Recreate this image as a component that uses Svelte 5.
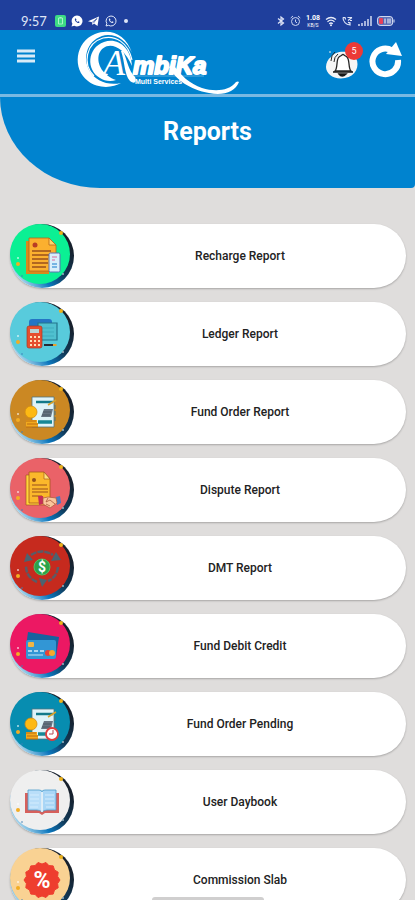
<script lang="ts">
	let reports = [
		{ title: 'Recharge Report', icon: 'recharge', color: '#0bf094' },
		{ title: 'Ledger Report', icon: 'ledger', color: '#58cbdc' },
		{ title: 'Fund Order Report', icon: 'fund', color: '#cb8823' },
		{ title: 'Dispute Report', icon: 'dispute', color: '#ea6268' },
		{ title: 'DMT Report', icon: 'dmt', color: '#c62a1e' },
		{ title: 'Fund Debit Credit', icon: 'card', color: '#ec1863' },
		{ title: 'Fund Order Pending', icon: 'pending', color: '#078db0' },
		{ title: 'User Daybook', icon: 'book', color: '#efefef' },
		{ title: 'Commission Slab', icon: 'commission', color: '#f9d293' }
	];

	let notifications = 5;

	// scalloped edge of the commission seal
	const seal = Array.from({ length: 28 }, (_, i) => {
		const r = i % 2 ? 16 : 18;
		const a = (i * Math.PI) / 14;
		return `${(32 + r * Math.cos(a)).toFixed(1)},${(32 + r * Math.sin(a)).toFixed(1)}`;
	}).join(' ');
</script>

<div class="screen">
	<div class="status-bar">
		<span class="time">9:57</span>
		<div class="status-left">
			<svg width="11" height="12" viewBox="0 0 11 12">
				<rect width="11" height="12" rx="2" fill="#3ddc84" />
				<path d="M3.500 3h4v6h-4z M4.500 2.500h2" fill="none" stroke="#a9f3c9" />
			</svg>
			<svg width="12" height="12" viewBox="0 0 12 12">
				<path d="M6 .5A5.500 5.500 0 1 1 3.300 10.800L.5 11.500l.9-2.700A5.500 5.500 0 0 1 6 .5z" fill="#fff" />
				<path d="M4 3.500c-.8 2 1.800 5 4.200 4.500l.2-1.200-1.300-.5-.6.600-1.500-1.500.5-.7-.6-1.300z" fill="#1f3f9c" />
			</svg>
			<svg width="12" height="12" viewBox="0 0 12 12">
				<path d="M0 6.300 11 1.500 9.500 11 6 8.500 4.500 10 4 7.300z" fill="#fff" />
				<path d="M4.200 7.300 9 3.500 5.500 8" fill="none" stroke="#1f3f9c" stroke-width=".7" />
			</svg>
			<svg width="12" height="12" viewBox="0 0 12 12">
				<path d="M6 1A5 5 0 1 1 3.500 10.300L1 11l.8-2.400A5 5 0 0 1 6 1z" fill="none" stroke="#dfe5f7" />
				<path d="M4 3.500c-.8 2 1.800 5 4.200 4.500l.2-1.200-1.300-.5-.6.600-1.500-1.500.5-.7-.6-1.300z" fill="#dfe5f7" />
			</svg>
			<span class="more"></span>
		</div>
		<div class="status-right">
			<svg width="8" height="12" viewBox="0 0 8 12">
				<path d="M1 3.500 6.500 8 4 10V2l2.500 2L1 8.500" fill="none" stroke="#dfe5f7" stroke-width="1.200" />
			</svg>
			<svg width="11" height="12" viewBox="0 0 11 12">
				<circle cx="5.500" cy="6.500" r="4" fill="none" stroke="#cdd6f0" />
				<path d="M5.500 4.500v2.300l1.500 1M.7 3 3 1M10.300 3 8 1" fill="none" stroke="#cdd6f0" />
			</svg>
			<div class="speed"><b>1.08</b><span>KB/S</span></div>
			<svg width="12" height="12" viewBox="0 0 12 12">
				<path d="M1 4.500q5-4 10 0M2.500 6.700q3.500-3 7 0M4.200 8.700q1.800-1.400 3.600 0" fill="none" stroke="#e8ecf9" stroke-width="1.300" />
				<circle cx="6" cy="10.300" r="1" fill="#e8ecf9" />
			</svg>
			<svg width="11" height="12" viewBox="0 0 11 12">
				<path d="M1 2.500c0 4 3 7 7 7.500V7.800l-2-.5M1 2.500h2l.6 2M5.500 2.500H10M6 5.500l4-3M8 5.500h2" fill="none" stroke="#dfe5f7" stroke-width="1.200" />
			</svg>
			<svg width="14" height="12" viewBox="0 0 14 12">
				<path d="M1 9v2M4 8v3M7 6v5M10 4v7M13 1v10" stroke="#dfe5f7" stroke-width="1.400" />
			</svg>
			<svg width="18" height="12" viewBox="0 0 18 12">
				<rect x=".6" y="1.600" width="15" height="8.800" rx="2.500" fill="#5369b4" stroke="#dfe5f7" />
				<rect x="2" y="3" width="4" height="6" rx="1" fill="#e8405a" />
				<path d="M8 3.500v5M11 3.500v5M13 3.500v5" stroke="#fff" />
				<path d="M17 4.500v3" stroke="#dfe5f7" />
			</svg>
		</div>
	</div>

	<header>
		<button class="menu" aria-label="Menu">
			<svg width="20" height="16" viewBox="0 0 20 16">
				<path d="M1 3h18M1 8h18M1 13h18" stroke="#d9ebf7" stroke-width="3" />
			</svg>
		</button>
		<svg class="logo" width="170" height="64" viewBox="0 0 170 64" role="img" aria-label="Ambika Multi Services">
			<g fill="#fff">
				<path d="M60 23C54 4 38-2 23 4 3 12 0 39 16 51c10 8 25 7 33 2-13 3-26-2-32-13C9 23 19 6 36 5c11 0 19 7 24 18z" />
				<path d="M60 36C59 17 45 7 32 12 15 18 14 40 28 48c4 3 11 4 16 2-12-4-20-15-17-26 5-13 23-12 33 12z" />
				<path d="M60 30C56 12 43 5 31 8 14 13 10 34 22 46" fill="none" stroke="#fff" stroke-width="1.200" />
				<text class="initial" x="31" y="45">A</text>
				<path d="M49 21c4 11 3 23 9 30 5 4 7 0 5-4-7-7-7-15-12-26z" />
			</g>
			<g fill="#fff">
				<text class="brand" x="61" y="44">mbiKa</text>
				<text class="tagline" x="63" y="54">Multi Services</text>
				<path d="M101 34c7 11 17 20 29 24 13 4 27 3 34-6q2-1 3 0c-4 10-16 14-30 11-19-3-34-14-40-26z" />
				<path d="M62 46h70" stroke="#fff" stroke-opacity=".5" stroke-width=".7" />
			</g>
		</svg>
		<div class="actions">
			<button class="bell" aria-label="Notifications">
				<svg width="38" height="40" viewBox="0 0 38 40">
					<path d="M6 15c5-7 20-7 25 1 4 8 0 18-11 20C9 38 1 32 1 25c0-4 2-8 5-10z" fill="#f5f5f5" />
					<path d="M10 29c3-3 1-12 4-14 1-1 2-1 3-2 1-1 1-1 2 0 1 1 2 1 3 2 3 3 1 11 4 14z" fill="#fff" stroke="#252525" stroke-width="1.300" />
					<path d="M8 30h20M14 32q3 4 7 0z" fill="#171717" stroke="#171717" stroke-width="1.500" />
					<path d="M9 20q0-5 4-8M6 19q0-6 4-9" fill="none" stroke="#252525" />
					<circle cx="5" cy="10" r="1" fill="#9dc9e4" />
				</svg>
				<span class="count">{notifications}</span>
			</button>
			<button aria-label="Refresh">
				<svg width="34" height="40" viewBox="0 0 34 40">
					<path d="M23 8.500A12.800 12.800 0 1 0 29 18" fill="none" stroke="#fff" stroke-width="6" />
					<path d="M27 0l6 14-16-2z" fill="#fff" />
				</svg>
			</button>
		</div>
	</header>

	<div class="hero">
		<h1>Reports</h1>
	</div>

	<main>
		{#each reports as report}
			<button class="report">
				<svg class="badge" width="64" height="64" viewBox="0 0 64 64" aria-hidden="true">
					<defs>
						<linearGradient id="rim-{report.icon}" x1=".9" y1=".3" x2=".2" y2=".9">
							<stop offset="0" stop-color="#17202c" />
							<stop offset=".4" stop-color="#103a59" />
							<stop offset=".7" stop-color="#0b76bd" />
							<stop offset="1" stop-color="#9ed0ea" />
						</linearGradient>
					</defs>
					<circle cx="32" cy="32" r="32" fill="url(#rim-{report.icon})" />
					<circle cx="30" cy="30" r="30" fill={report.color} />
					<circle cx="51" cy="9" r="2" fill="#eeb31b" />
					<circle cx="8" cy="40" r="2" fill="#f3ad23" />
					<circle cx="8" cy="34" r="1" fill="#fff" fill-opacity=".7" />
					<circle cx="53" cy="50" r="1" fill="#9cb8c6" />
					<circle cx="12" cy="52" r="1" fill="#3d7fb8" fill-opacity=".6" />

					{#if report.icon === 'recharge'}
						<path d="M16 17h4v29h19v4H16z" fill="#d98a1c" />
						<path d="M19 14h20l7 7v26H19z" fill="#fbb02f" stroke="#b5651c" stroke-width=".8" />
						<path d="M39 14v7h7z" fill="#ffd56a" stroke="#b5651c" stroke-width=".8" />
						<circle cx="25" cy="21" r="2.500" fill="#b93d24" />
						<path d="M22 27h19M22 31h17M22 35h16M22 39h16M22 43h14" stroke="#9a4f1d" stroke-width="1.300" />
						<rect x="39" y="29" width="11" height="19" rx="1.500" fill="#d8effa" stroke="#5d70b0" />
						<path d="M42 33h5M42 36h3" stroke="#db6b9b" />
						<path d="M42 40h5M42 43h5" stroke="#56a2dc" stroke-width="1.500" />
					{:else if report.icon === 'ledger'}
						<path d="M19 33V20q0-3 3-3h17q3 0 3 3v13z" fill="#2475c4" />
						<path d="M28 21h19v17H28z" fill="#4fc0cf" stroke="#23758c" stroke-width="1.200" />
						<path d="M31 26h13M31 30h13M31 34h13" stroke="#2d98a9" stroke-width=".5" />
						<rect x="17" y="24" width="15" height="22" rx="2" fill="#e64e2e" stroke="#a83922" stroke-width=".7" />
						<path d="M20 27h9v4h-9z" fill="#b9d5d5" />
						<path d="M21 34v10M25 34v10M29 34v10" stroke="#ffe0b7" stroke-width="2" stroke-dasharray="2 2" />
						<path d="M34 42h9v2h-9z" fill="#272b35" />
						<path d="M43 42h3l1 1-1 1h-3z" fill="#e8a32a" />
					{:else if report.icon === 'fund' || report.icon === 'pending'}
						<path d="M22 17h22v30H22z" fill="#dff3f8" stroke="#51747d" stroke-width=".8" />
						<path d="M45 25v18" stroke="#51747d" stroke-dasharray="4 2" />
						<path d="M26 22h17" stroke="#137989" stroke-width="2.500" />
						<path d="M38 25l8-5" stroke="#d8a129" stroke-width="1.500" />
						<path d="M34 29h9l-2 8H31z" fill="#667482" />
						<path d="M33 32h8M32 35h8" stroke="#404d59" stroke-width=".7" />
						<path d="M28 42h14" stroke="#168796" stroke-width="3.500" />
						<circle cx="21" cy="32" r="6" fill="#fdb913" stroke="#d38d12" stroke-width=".8" />
						<path d="M16 40h11v3h1v4H16z" fill="#f1a91d" />
						<path d="M16 41h10M17 44h11M16 47h12" stroke="#bc6c13" />
						{#if report.icon === 'pending'}
							<circle cx="42" cy="42" r="6" fill="#fff" stroke="#df3e3e" stroke-width="1.800" />
							<path d="M43 38v4h-4" fill="none" stroke="#b84653" />
						{/if}
					{:else if report.icon === 'dispute'}
						<path d="M16 17h4v27h20v3H16z" fill="#ffd43a" stroke="#a8591f" stroke-width=".7" />
						<path d="M19 14h15l6 7v24H19z" fill="#fbb82b" stroke="#a8591f" stroke-width=".8" />
						<path d="M34 14v7h6z" fill="#ffe07a" stroke="#a8591f" stroke-width=".7" />
						<circle cx="24" cy="22" r="2" fill="#93501c" />
						<path d="M22 27h15M22 31h16M22 34h16M22 38h10" stroke="#9a4f1d" stroke-width="1.200" />
						<path d="M28 38h5l1 8-5 1z" fill="#c72e58" />
						<path d="M46 39l4-1 1 7-4 2z" fill="#427bc7" />
						<path d="M33 40l5-1 8 1 1 5-7 5-7-4z" fill="#fbc69c" stroke="#a9563a" stroke-width=".7" />
						<path d="M38 40l-2 4 4-2 5 4M36 46l4 2" fill="none" stroke="#a9563a" stroke-width=".8" />
					{:else if report.icon === 'dmt'}
						<g fill="none" stroke="#5b5b66" stroke-width="2.500" stroke-dasharray="6 1">
							<path d="M21 19q11-7 22 0" />
							<path d="M48 31q-1 10-10 14" />
							<path d="M27 46q-11-5-11-16" />
						</g>
						<path d="M41 25l10-1-5-8zM29 42l8 2-5 7zM14 26l3-9 6 7z" fill="#4c6370" />
						<circle cx="32" cy="31" r="8" fill="#2ba34b" stroke="#53bf63" />
						<text class="dollar" x="32" y="36">$</text>
					{:else if report.icon === 'card'}
						<path d="M18 18l31 5-3 20-30-10z" fill="#17629f" />
						<rect x="16" y="26" width="30" height="19" rx="2" fill="#3296d5" />
						<rect x="18" y="28" width="6" height="5" rx="1" fill="#f1b646" />
						<path d="M18 37h16" stroke="#d4ecf8" stroke-width="1.500" stroke-dasharray="4 2" />
						<path d="M18 41h15" stroke="#93cbed" stroke-width="1.500" />
						<circle cx="38" cy="39" r="3" fill="#e84238" />
						<circle cx="42" cy="39" r="3" fill="#f6a72b" />
					{:else if report.icon === 'book'}
						<path d="M15 23h34v20H35l-3 2-3-2H15z" fill="#d6605c" />
						<path d="M18 20h11q3 0 3 2v20q-2-2-5-2h-9z" fill="#b9def9" stroke="#4b9dcc" stroke-width=".8" />
						<path d="M46 20H35q-3 0-3 2v20q2-2 5-2h9z" fill="#a9d6f6" stroke="#4b9dcc" stroke-width=".8" />
						<path d="M20 25h9M20 29h9M20 33h9M20 37h8M35 25h9M35 29h9M35 33h9M36 37h8" stroke="#d4ecfd" />
						<path d="M32 22v20" stroke="#fff" stroke-width="1.500" />
					{:else}
						<polygon points={seal} fill="#ee3e2e" stroke="#ee3e2e" stroke-linejoin="round" />
						<text class="percent" x="32" y="40">%</text>
					{/if}
				</svg>
				<span class="title">{report.title}</span>
			</button>
		{/each}
	</main>

	<div class="home-pill"></div>
</div>

<style>
	:global(body) {
		background: #dfdddc;
	}

	.screen {
		height: 100vh;
		overflow-y: auto;
		scrollbar-width: none;
		background: #dfdddc;
		font-family: Roboto, 'Liberation Sans', sans-serif;
	}

	button {
		padding: 0;
		border: none;
		background: none;
		font-family: inherit;
		cursor: pointer;
	}

	svg {
		display: block;
		flex-shrink: 0;
	}

	.status-bar {
		display: flex;
		align-items: center;
		box-sizing: border-box;
		height: 30px;
		padding: 12px 20px 0 21px;
		background: #1f3f9c;
		color: #dfe5f7;
	}

	.time {
		font-family: Lato, sans-serif;
		font-size: 13px;
		line-height: 16px;
	}

	.status-left,
	.status-right {
		display: flex;
		align-items: center;
		gap: 5px;
	}

	.status-left {
		margin-left: 8px;
	}

	.status-right {
		margin-left: auto;
	}

	.more {
		width: 4px;
		height: 4px;
		margin-left: 2px;
		border-radius: 50%;
		background: #dfe5f7;
	}

	.speed {
		display: flex;
		flex-direction: column;
		align-items: center;
		font-size: 7px;
		line-height: 8px;
		color: #fff;
	}

	.speed span {
		font-size: 5px;
		line-height: 6px;
	}

	header {
		display: flex;
		height: 64px;
		padding: 0 12px 0 16px;
		background: #0083cf;
		border-bottom: 3px solid #79b9e2;
	}

	.menu {
		align-self: flex-start;
		margin-top: 18px;
	}

	.logo {
		margin-left: 36px;
		overflow: visible;
	}

	.initial {
		font: italic 36px 'Liberation Serif', serif;
	}

	.brand {
		font: italic bold 24px 'Liberation Sans', sans-serif;
		stroke: #fff;
		stroke-width: 2px;
		stroke-linejoin: round;
	}

	.tagline {
		font: bold 7px 'Liberation Sans', sans-serif;
	}

	.actions {
		display: flex;
		align-items: center;
		gap: 6px;
		margin-left: auto;
	}

	.bell {
		position: relative;
	}

	.count {
		position: absolute;
		top: 0;
		right: 0;
		width: 18px;
		height: 18px;
		border-radius: 50%;
		background: #ec3a37;
		color: #fff;
		font-size: 9px;
		line-height: 18px;
		text-align: center;
	}

	.hero {
		padding: 20px 0 41px;
		background: #0083cf;
		border-bottom-left-radius: 100px 91px;
		border-bottom-right-radius: 4px;
	}

	h1 {
		margin: 0;
		color: #fff;
		font-size: 25px;
		font-weight: 700;
		line-height: 30px;
		text-align: center;
	}

	main {
		display: flex;
		flex-direction: column;
		gap: 14px;
		padding: 36px 9px 14px 10px;
	}

	.report {
		display: flex;
		align-items: center;
		border-radius: 32px;
		background: #fff;
		box-shadow: 0 1px 2px rgba(0, 0, 0, 0.25);
	}

	.title {
		flex: 1;
		color: #222;
		font-size: 12px;
		font-weight: 500;
		text-align: center;
	}

	.dollar,
	.percent {
		fill: #fff;
		font-weight: bold;
		text-anchor: middle;
	}

	.dollar {
		font-size: 14px;
	}

	.percent {
		font-size: 23px;
	}

	.home-pill {
		position: fixed;
		bottom: 0;
		left: 50%;
		width: 112px;
		height: 3px;
		margin-left: -56px;
		border-radius: 3px 3px 0 0;
		background: #d0cfcf;
	}
</style>
